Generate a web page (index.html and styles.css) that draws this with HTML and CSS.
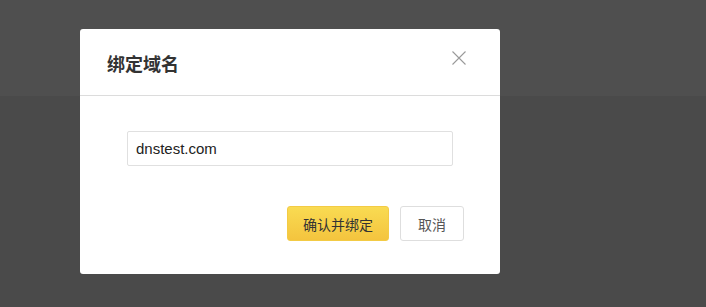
FILE: index.html
```html
<!DOCTYPE html>
<html lang="zh-CN">
<head>
    <meta charset="UTF-8">
    <meta name="viewport" content="width=device-width, initial-scale=1.0">
    <title>绑定域名</title>
    <link rel="stylesheet" href="styles.css">
</head>
<body>

    <div class="page">
        <div class="page-top"></div>
        <div class="page-rest"></div>
    </div>

    <div class="dialog">
        <div class="dialog-header">
            <h2 class="dialog-title">绑定域名</h2>
            <button class="dialog-close" aria-label="关闭">
                <svg width="14" height="14" viewBox="0 0 14 14">
                    <path d="M0.5 0.5 L13.5 13.5 M13.5 0.5 L0.5 13.5" stroke="#9a9a9a" stroke-width="1.1" fill="none"/>
                </svg>
            </button>
        </div>

        <div class="dialog-body">
            <input type="text" class="domain-input" value="dnstest.com">

            <div class="dialog-actions">
                <button class="btn btn-primary">确认并绑定</button>
                <button class="btn btn-default">取消</button>
            </div>
        </div>
    </div>

</body>
</html>
```

FILE: styles.css
```css
/* Page de fond */
body {
    margin: 0;
    padding: 0;
    font-family: 'Liberation Sans', 'Noto Sans CJK SC', sans-serif;
    background-color: #4a4a4a;
}

.page {
    display: flex;
    flex-direction: column;
    min-height: 100vh;
}

.page-top {
    height: 96px;
    background-color: #4f4f4f;
}

.page-rest {
    flex: 1;
    background-color: #4a4a4a;
}

/* Boite de dialogue */
.dialog {
    position: absolute;
    left: 80px;
    top: 29px;
    width: 420px;
    background-color: #fff;
    border-radius: 3px;
}

.dialog-header {
    height: 67px;
    display: flex;
    align-items: center;
    justify-content: space-between;
    padding: 0 34px 0 27px;
    border-bottom: 1px solid #dcdcdc;
    box-sizing: border-box;
}

.dialog-title {
    margin: 0;
    font-size: 18px;
    font-weight: bold;
    color: #333;
    font-family: 'Noto Sans CJK SC', sans-serif;
    padding-top: 2px;
}

.dialog-close {
    background: none;
    border: none;
    padding: 0;
    width: 14px;
    height: 14px;
    margin-top: -8px;
    cursor: pointer;
}

.dialog-close svg {
    display: block;
}

.dialog-body {
    padding: 35px 36px 33px 47px;
}

.domain-input {
    display: block;
    width: 326px;
    height: 35px;
    box-sizing: border-box;
    padding: 0 8px;
    font-family: 'Liberation Sans', sans-serif;
    font-size: 15px;
    color: #222;
    border: 1px solid #e0e0e0;
    border-radius: 2px;
    outline: none;
}

.dialog-actions {
    display: flex;
    justify-content: flex-end;
    gap: 11px;
    margin-top: 40px;
}

.btn {
    height: 35px;
    box-sizing: border-box;
    font-family: 'Noto Sans CJK SC', sans-serif;
    font-size: 14px;
    border-radius: 3px;
    cursor: pointer;
}

.btn-primary {
    width: 102px;
    color: #333;
    border: 1px solid #f3cb45;
    background: linear-gradient(to bottom, #f9db52, #f4c43e);
}

.btn-default {
    width: 64px;
    color: #555;
    background-color: #fff;
    border: 1px solid #dedede;
}
```
